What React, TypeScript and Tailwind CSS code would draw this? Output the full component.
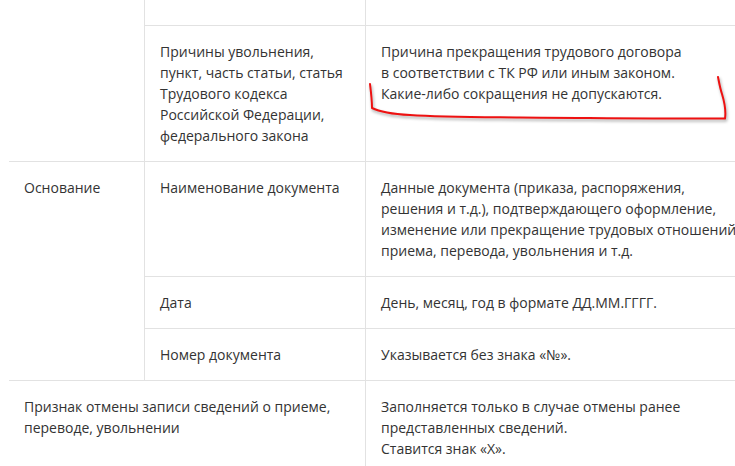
import React from "react";

const td = "border-[#e2e2e2] px-[15px] py-[15px] align-top";

export default function App() {
  return (
    <div
      className="relative w-[735px] h-[466px] overflow-hidden bg-white text-[14px] leading-[21px] text-[#333333]"
      style={{ fontFamily: '"Open Sans", "Noto Sans", sans-serif' }}
    >
      <table className="ml-[9px] table-fixed border-separate border-spacing-0 w-[760px]">
        <colgroup>
          <col className="w-[135px]" />
          <col className="w-[221px]" />
          <col className="w-[404px]" />
        </colgroup>
        <tbody>
          <tr>
            <td rowSpan={2} className="p-0" />
            <td className="border-l border-[#e2e2e2] p-0">
              <div className="h-[25px]" />
            </td>
            <td className="border-l border-[#e2e2e2] p-0" />
          </tr>
          <tr>
            <td className={`${td} border-l border-t whitespace-nowrap`}>
              Причины увольнения,
              <br />
              пункт, часть статьи, статья
              <br />
              Трудового кодекса
              <br />
              Российской Федерации,
              <br />
              федерального закона
            </td>
            <td className={`${td} border-l border-t whitespace-nowrap`}>
              Причина прекращения трудового договора
              <br />
              в соответствии с ТК РФ или иным законом.
              <br />
              Какие-либо сокращения не допускаются.
            </td>
          </tr>
          <tr>
            <td rowSpan={3} className={`${td} border-t`}>
              Основание
            </td>
            <td className={`${td} border-l border-t`}>Наименование документа</td>
            <td className={`${td} border-l border-t whitespace-nowrap`}>
              Данные документа (приказа, распоряжения,
              <br />
              решения и т.д.), подтверждающего оформление,
              <br />
              изменение или прекращение трудовых отношений
              <br />
              приема, перевода, увольнения и т.д.
            </td>
          </tr>
          <tr>
            <td className={`${td} border-l border-t`}>Дата</td>
            <td className={`${td} border-l border-t`}>День, месяц, год в формате ДД.ММ.ГГГГ.</td>
          </tr>
          <tr>
            <td className={`${td} border-l border-t`}>Номер документа</td>
            <td className={`${td} border-l border-t`}>Указывается без знака «№».</td>
          </tr>
          <tr>
            <td colSpan={2} className={`${td} border-t whitespace-nowrap`}>
              Признак отмены записи сведений о приеме,
              <br />
              переводе, увольнении
            </td>
            <td className={`${td} border-l border-t whitespace-nowrap`}>
              Заполняется только в случае отмены ранее
              <br />
              представленных сведений.
              <br />
              Ставится знак «Х».
            </td>
          </tr>
        </tbody>
      </table>

      {/* red hand-drawn mark */}
      <svg
        className="pointer-events-none absolute left-0 top-0"
        width="735"
        height="466"
        viewBox="0 0 735 466"
        style={{ filter: "drop-shadow(1px 2px 1.5px rgba(0,0,0,0.35))" }}
      >
        <path
          d="M370 84 C371 92 372 100 372 108 C380 112 392 114 410 115 C440 117 470 117 520 117.5 C600 118 680 119 725 118.5 C726 112 725 104 722 94 C720 88 719 82 718 77"
          fill="none"
          stroke="#ee1111"
          strokeWidth="2"
          strokeLinecap="round"
          strokeLinejoin="round"
        />
      </svg>
    </div>
  );
}
